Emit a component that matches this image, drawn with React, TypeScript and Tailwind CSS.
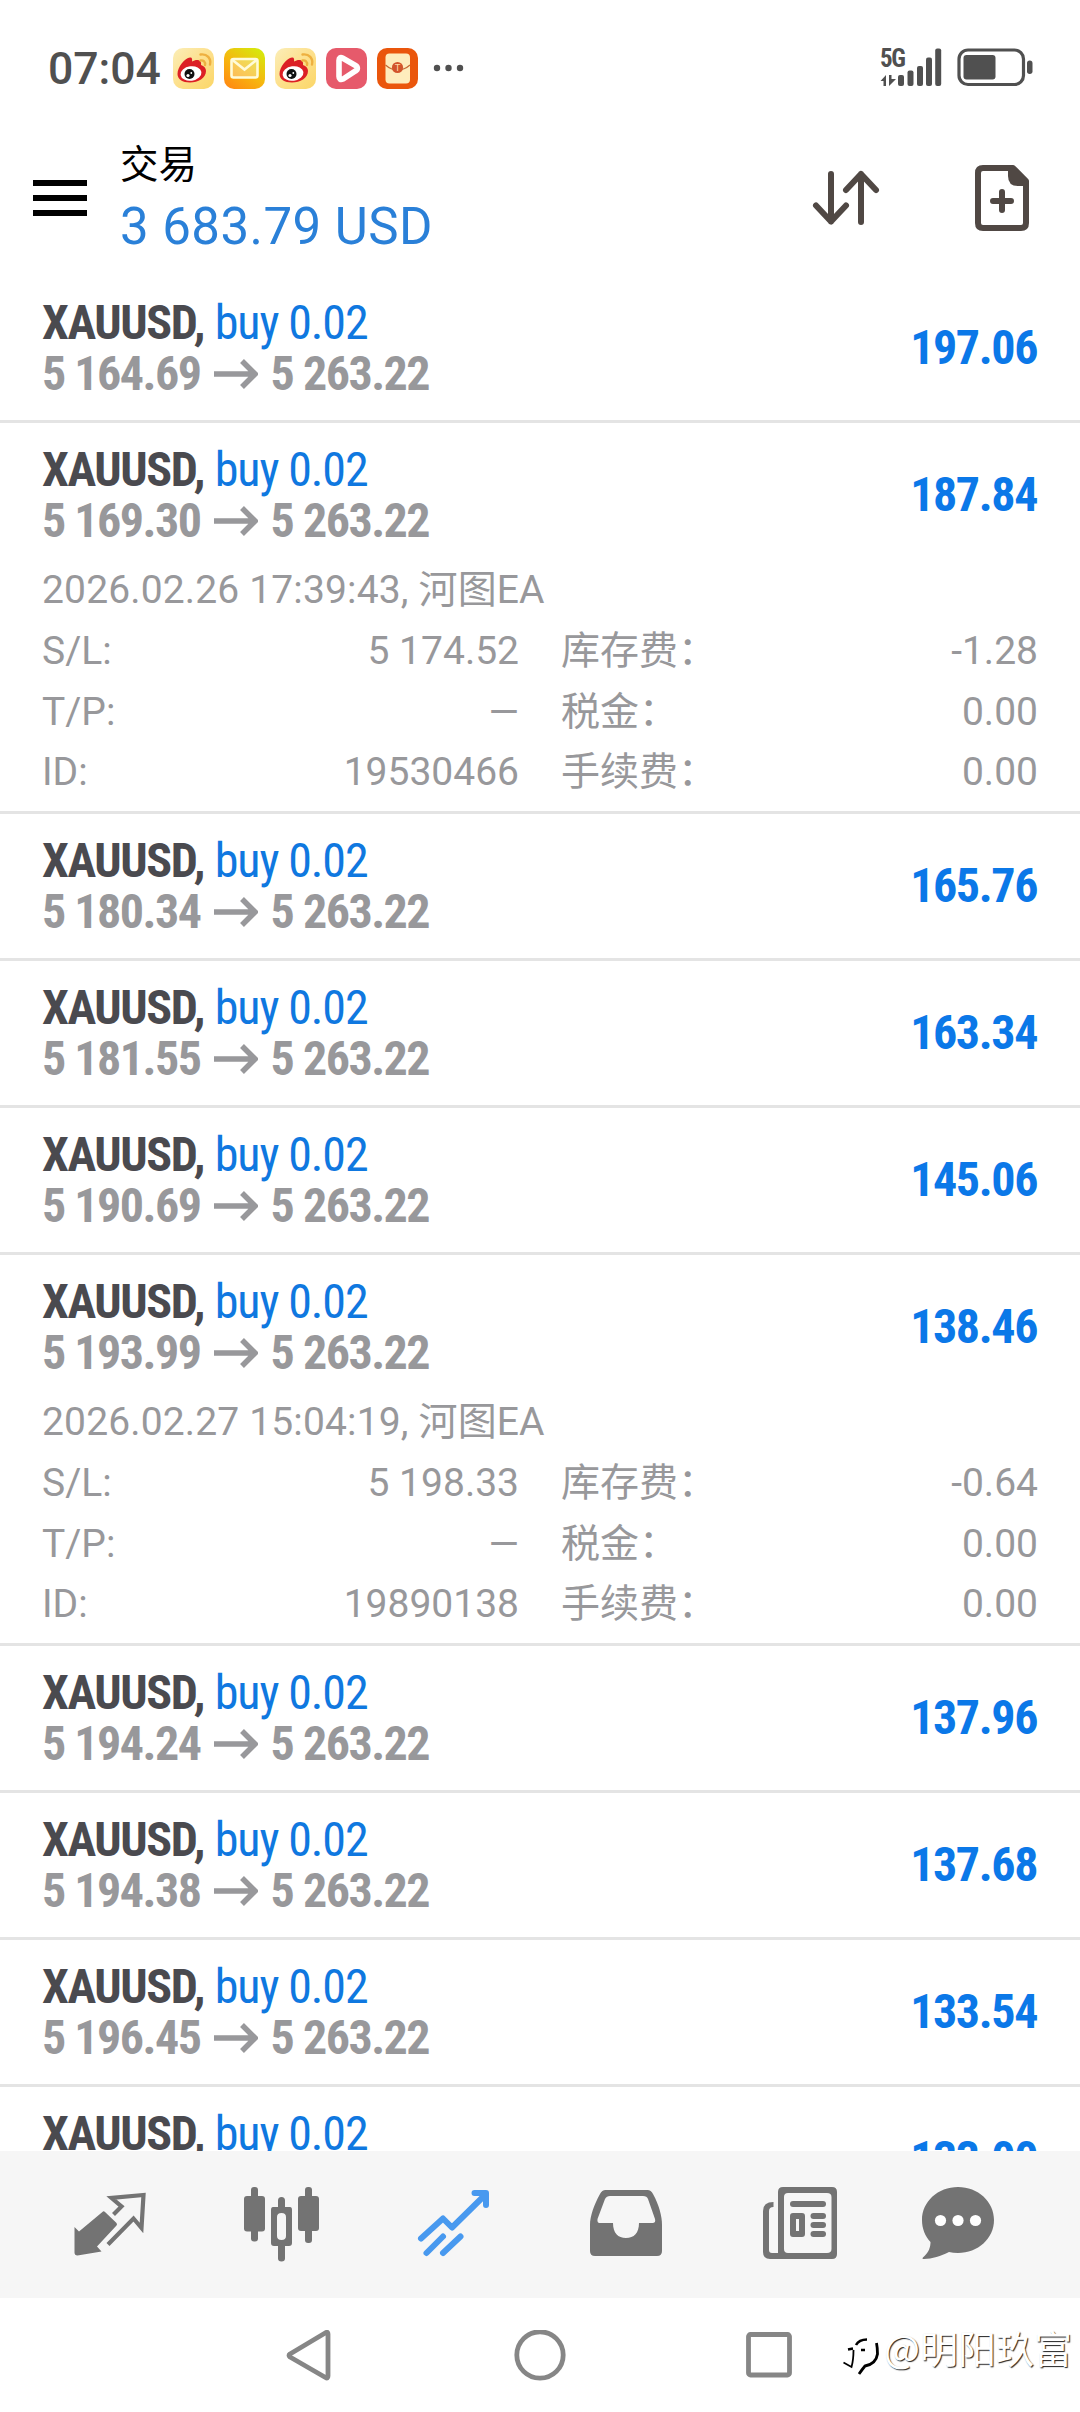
import { cva } from "class-variance-authority";
import type { ReactNode } from "react";

type Details = {
  opened: string;
  stopLoss: string;
  ticket: string;
  swap: string;
};

type Position = {
  open: string;
  profit: string;
  details?: Details;
};

const positions: Position[] = [
  { open: "5 164.69", profit: "197.06" },
  {
    open: "5 169.30",
    profit: "187.84",
    details: {
      opened: "2026.02.26 17:39:43, 河图EA",
      stopLoss: "5 174.52",
      ticket: "19530466",
      swap: "-1.28",
    },
  },
  { open: "5 180.34", profit: "165.76" },
  { open: "5 181.55", profit: "163.34" },
  { open: "5 190.69", profit: "145.06" },
  {
    open: "5 193.99",
    profit: "138.46",
    details: {
      opened: "2026.02.27 15:04:19, 河图EA",
      stopLoss: "5 198.33",
      ticket: "19890138",
      swap: "-0.64",
    },
  },
  { open: "5 194.24", profit: "137.96" },
  { open: "5 194.38", profit: "137.68" },
  { open: "5 196.45", profit: "133.54" },
  { open: "5 197.22", profit: "133.00" },
];

const CURRENT_PRICE = "5 263.22";

const condensed = cva("font-['Roboto_Condensed','Roboto',sans-serif] text-[48px] leading-[51px]", {
  variants: {
    tone: {
      symbol: "font-bold tracking-[-1.4px] text-[#4a4a4f]",
      side: "ml-[1px] font-normal tracking-[-1.1px] text-[#0f78e0]",
      price: "font-bold tracking-[-1.5px] text-[#98989b]",
      profit: "mr-[1px] mb-[2px] font-bold tracking-[-1.4px] text-[#0b78e8]",
    },
  },
});

function WeiboIcon() {
  return (
    <svg width="41" height="41" viewBox="0 0 41 41">
      <defs>
        <linearGradient id="weibo" x1="0" y1="0" x2="1" y2="1">
          <stop offset="0" stopColor="#fbeeb8" />
          <stop offset="0.5" stopColor="#fde08c" />
          <stop offset="1" stopColor="#fbd667" />
        </linearGradient>
      </defs>
      <rect width="41" height="41" rx="10" fill="url(#weibo)" />
      <path
        d="M4.500 26C4.500 19 12 10 17 9.500C19 9.200 19.500 11 19 13.500C23 11 29 11 28 17C31 18 33 20 33 23C33 30 25 34.500 17 34.500C9.500 34.500 4.500 31 4.500 26Z"
        fill="#dc1f25"
      />
      <ellipse cx="18" cy="25.500" rx="10.500" ry="7.200" fill="#fff" transform="rotate(-8 18 25.500)" />
      <circle cx="16.500" cy="26" r="5" fill="#111" />
      <circle cx="15" cy="27.500" r="1.600" fill="#fff" />
      <circle cx="18.300" cy="25" r="0.900" fill="#fff" />
      <path
        d="M27.500 12.500C30.500 12 32.500 14 32 17M27.500 6.500C34 5.500 38.500 10.500 37 16.500"
        fill="none"
        stroke="#eeb040"
        strokeWidth="2.400"
        strokeLinecap="round"
      />
    </svg>
  );
}

function MailIcon() {
  return (
    <svg width="41" height="41" viewBox="0 0 41 41">
      <defs>
        <linearGradient id="mail" x1="0.150" y1="1" x2="0.850" y2="0">
          <stop offset="0" stopColor="#ff8a12" />
          <stop offset="0.450" stopColor="#f7b50f" />
          <stop offset="1" stopColor="#d5ea0c" />
        </linearGradient>
      </defs>
      <rect width="41" height="41" rx="10" fill="url(#mail)" />
      <rect x="7.500" y="11" width="26" height="18.500" rx="2" fill="#fff" fillOpacity="0.300" stroke="#fffbd8" strokeWidth="2.600" />
      <path d="M8.500 12L20.500 21.500L32.500 12" fill="none" stroke="#fffbd8" strokeWidth="2.600" />
    </svg>
  );
}

function VideoIcon() {
  return (
    <svg width="41" height="41" viewBox="0 0 41 41">
      <rect width="41" height="41" rx="10" fill="#e65a6b" />
      <path
        d="M13 12.500C13 9.800 14.500 9 16.500 10L29.500 17.500C32 19 32 21.500 29.500 23L17 31C14.500 32.200 13 31 13 28.500Z"
        fill="none"
        stroke="#fff"
        strokeWidth="5.600"
      />
    </svg>
  );
}

function EnvelopeIcon() {
  return (
    <svg width="41" height="41" viewBox="0 0 41 41">
      <rect width="41" height="41" rx="10" fill="#ea560c" />
      <rect x="8.500" y="5.500" width="24.500" height="30" rx="4" fill="#feedbd" />
      <path d="M8.500 17C13 21 17 22 20.500 22C24 22 28.500 21 33 17" fill="none" stroke="#c46a35" strokeWidth="1.200" />
      <circle cx="20.500" cy="19.500" r="5.600" fill="#d2552c" />
      <text x="20.500" y="23" textAnchor="middle" fontSize="9.500" fontFamily="Roboto, sans-serif" fill="#ffd9a8">
        T
      </text>
    </svg>
  );
}

function StatusBar() {
  return (
    <div className="flex h-[137px] items-start pt-12 pr-[46px] pl-[48px] text-[#505050]">
      <div className="-mt-[4px] w-[125px] font-['Roboto',sans-serif] text-[44.500px] leading-[51px] font-medium">
        07:04
      </div>
      <div className="flex gap-[10px]">
        <WeiboIcon />
        <MailIcon />
        <WeiboIcon />
        <VideoIcon />
        <EnvelopeIcon />
      </div>
      <svg className="ml-[15px]" width="32" height="41" viewBox="0 0 32 41" fill="currentColor">
        <circle cx="4" cy="20" r="3.200" />
        <circle cx="15.500" cy="20" r="3.200" />
        <circle cx="27" cy="20" r="3.200" />
      </svg>
      <svg className="ml-auto overflow-visible" width="154" height="41" viewBox="0 0 154 41" fill="currentColor">
        <text x="0" y="19" fontSize="25" fontWeight="700" fontFamily="'Roboto Condensed', Roboto, sans-serif" textLength="26">
          5G
        </text>
        <path d="M0.500 33L6 27V38H3.500V33ZM9 27H11.500V31H16L9 38Z" />
        <rect x="18" y="27" width="6" height="11" rx="2" />
        <rect x="27.500" y="22.500" width="6" height="15.500" rx="2" />
        <rect x="37" y="18" width="6" height="20" rx="2" />
        <rect x="46" y="9.500" width="6" height="28.500" rx="2" />
        <rect x="55.200" y="0.500" width="6" height="37.500" rx="2" />
        <rect x="79" y="2" width="64.500" height="34.500" rx="9" fill="none" stroke="currentColor" strokeWidth="3.200" />
        <rect x="83.500" y="7" width="32" height="24.500" rx="3" />
        <rect x="147" y="12.500" width="5.500" height="13.500" rx="2.700" />
      </svg>
    </div>
  );
}

function Header() {
  return (
    <header className="flex h-[139px] items-start pr-[51px] pl-[33px]">
      <div className="mt-[43px] flex w-[54px] flex-col gap-[9px]">
        <span className="h-[6px] bg-black" />
        <span className="h-[6px] bg-black" />
        <span className="h-[6px] bg-black" />
      </div>
      <div className="ml-[33px] font-['Roboto','Noto_Sans_CJK_SC',sans-serif]">
        <h1 className="mt-[4px] h-[48px] text-[38.500px] leading-[48px] text-black">交易</h1>
        <p className="mt-[5px] text-[51px] leading-[66px] tracking-[0.45px] text-[#2a80d8]">3 683.79 USD</p>
      </div>
      <svg
        className="mt-[30px] ml-auto"
        width="70"
        height="62"
        viewBox="0 0 70 62"
        fill="none"
        stroke="#504844"
        strokeWidth="6"
        strokeLinecap="round"
        strokeLinejoin="round"
      >
        <path d="M20 7V54.500M5 38.500L20 54.500L35 38.500" />
        <path d="M50 55V7M35 23L50 7L65 23" />
      </svg>
      <svg className="mt-[28px] ml-[94px]" width="54" height="66" viewBox="0 0 54 66" fill="none">
        <path
          d="M8 3H38L51 16V58Q51 63 46 63H8Q3 63 3 58V8Q3 3 8 3Z"
          stroke="#504844"
          strokeWidth="6"
          strokeLinejoin="round"
        />
        <path d="M33 4V11Q33 21 43 21H53L51 14L40 3Z" fill="#504844" />
        <path d="M27 27V45M18 36H36" stroke="#504844" strokeWidth="6" strokeLinecap="round" />
      </svg>
    </header>
  );
}

function DetailRow({ label, value, feeLabel, fee }: { label: string; value: string; feeLabel: string; fee: string }) {
  return (
    <div className="grid h-[60.5px] grid-cols-[477px_1fr] gap-x-[42px]">
      <div className="flex items-center justify-between">
        <span>{label}</span>
        <span>{value}</span>
      </div>
      <div className="flex items-center justify-between">
        <span>{feeLabel}</span>
        <span>{fee}</span>
      </div>
    </div>
  );
}

function PositionRow({ open, profit, details }: Position) {
  return (
    <li className="border-b-[3px] border-[#e4e4e4] px-[42px]">
      <div className="flex h-[144px] items-center justify-between">
        <div>
          <p className="flex h-[51px] whitespace-pre">
            <span className={condensed({ tone: "symbol" })}>XAUUSD, </span>
            <span className={condensed({ tone: "side" })}>buy 0.02</span>
          </p>
          <p className="flex h-[51px] items-center">
            <span className={condensed({ tone: "price" })}>{open}</span>
            <svg className="mx-[13px]" width="44" height="30" viewBox="0 0 44 30" fill="none" stroke="#98989b" strokeWidth="5.500">
              <path d="M0 15H41M28 2L41 15L28 28" />
            </svg>
            <span className={condensed({ tone: "price" })}>{CURRENT_PRICE}</span>
          </p>
        </div>
        <span className={condensed({ tone: "profit" })}>{profit}</span>
      </div>
      {details && (
        <div className="-mt-[7px] h-[251px] font-['Roboto','Noto_Sans_CJK_SC',sans-serif] text-[39px] leading-[60px] text-[#98989b]">
          <p className="h-[61px] tracking-[0.15px]">{details.opened}</p>
          <DetailRow label="S/L:" value={details.stopLoss} feeLabel="库存费：" fee={details.swap} />
          <DetailRow label="T/P:" value="—" feeLabel="税金：" fee="0.00" />
          <DetailRow label="ID:" value={details.ticket} feeLabel="手续费：" fee="0.00" />
        </div>
      )}
    </li>
  );
}

function TabIcon({ width, children }: { width: number; children: ReactNode }) {
  return (
    <svg width={width} height="76" viewBox={`0 0 ${width} 76`} fill="currentColor">
      {children}
    </svg>
  );
}

function TabBar() {
  return (
    <nav className="flex h-[147px] shrink-0 bg-[#f6f6f6] pt-9 pl-[74px] text-[#737373]">
      <TabIcon width={72}>
        <path
          d="M39.500 27.500L47.500 19.500L37.500 11L69.500 8L67.500 41L59.500 31.500L34 57.500"
          fill="none"
          stroke="currentColor"
          strokeWidth="4.200"
        />
        <path d="M29 24.500Q30 24 31 25L42.500 36Q43.500 37.500 42.500 38.500L23 59.500L27.500 64.500L3.500 68.500Q0.500 68.500 0.500 65.500V40L5 44.500Z" />
      </TabIcon>
      <div className="ml-[98px]">
        <TabIcon width={76}>
          <rect y="9" width="21" height="35.500" rx="3" />
          <rect x="7" width="7" height="54.500" rx="3" />
          <path
            fillRule="evenodd"
            d="M29 20H46Q48 20 48 23V56Q48 59 45 59H30Q27 59 27 56V23Q27 20 29 20ZM33 30V49Q33 53 37.500 53Q42 53 42 49V30Q42 26 37.500 26Q33 26 33 30Z"
          />
          <path d="M34 23V13.500Q34 10 37.500 10Q41 10 41 13.500V23ZM34 57H41V71.500Q41 74.500 37.500 74.500Q34 74.500 34 71.500Z" />
          <rect x="54" y="9" width="21" height="35" rx="3" />
          <rect x="61" width="7" height="56" rx="3" />
        </TabIcon>
      </div>
      <div className="ml-[97px] text-[#4899ef]">
        <TabIcon width={74}>
          <g fill="none" stroke="currentColor" strokeWidth="6" strokeLinecap="round" strokeLinejoin="round">
            <path d="M4 51.500L26 31.500L35 40.500L68.500 7.500" />
            <path d="M57.500 6H69V18" />
            <path d="M9.500 66L26 49.500M26 66L43.500 49.500" />
          </g>
          <path d="M58 4H71V19L66 13Z" />
        </TabIcon>
      </div>
      <div className="ml-[99px]">
        <TabIcon width={73}>
          <path
            fillRule="evenodd"
            d="M15.500 3H57.500Q61 3 63 7C69 18 72 29 72 38V64Q72 69 67 69H5Q0 69 0 64V38C0 29 4 18 10 7Q12 3 15.500 3ZM20 9Q16.500 9 15 12L7.500 32Q7 36 9.500 36H23C23 46 28 51 36 51C44 51 49 46 49 36H62.500Q66 36 65 32L58 12Q57 9 53 9Z"
          />
        </TabIcon>
      </div>
      <div className="ml-[100px]">
        <TabIcon width={74}>
          <path
            fillRule="evenodd"
            d="M20 0H69Q74 0 74 5V67Q74 72 69 72H7Q0 72 0 65V24Q0 15 10.500 15V20Q6 20 6 24V63Q6 66 9 66H15V5Q15 0 20 0ZM25 6Q21 6 21 10V62Q21 66 25 66H64Q68.500 66 68.500 62V10Q68.500 6 64 6Z"
          />
          <rect x="27" y="14" width="36" height="6" rx="3" />
          <path fillRule="evenodd" d="M30 26H39Q42 26 42 29V47Q42 50 39 50H30Q27 50 27 47V29Q27 26 30 26ZM33 32V44H36V32Z" />
          <rect x="47.500" y="26" width="15.500" height="6" rx="3" />
          <rect x="47.500" y="35" width="15.500" height="6" rx="3" />
          <rect x="47.500" y="44" width="15.500" height="6" rx="3" />
        </TabIcon>
      </div>
      <div className="ml-[85px]">
        <TabIcon width={72}>
          <path d="M36 0C56 0 72 14.500 72 33C72 51.500 56 66 36 66Q31 66 27 65C19 69 10 72 2 72Q-1 72 2 69.500C7 65 8.500 60 8.500 55C3 49 0 41.500 0 33C0 14.500 16 0 36 0Z" />
          <g fill="#fff">
            <circle cx="18.500" cy="33.500" r="5.600" />
            <circle cx="36" cy="33.500" r="5.600" />
            <circle cx="53.500" cy="33.500" r="5.600" />
          </g>
        </TabIcon>
      </div>
    </nav>
  );
}

function SystemNav() {
  return (
    <div className="relative flex h-[114px] shrink-0 items-start bg-white pt-8 pl-[286px]">
      <svg width="508" height="51" viewBox="0 0 508 51" fill="none" stroke="#868686" strokeWidth="4.800" strokeLinejoin="round">
        <path d="M40 2.500Q42 1.500 42 4V46Q42 49 39.500 47.500L4 27Q2 25.500 4 24Z" />
        <circle cx="254" cy="25" r="23.200" />
        <rect x="462.500" y="4.500" width="41" height="40.500" rx="2" />
      </svg>
      <div className="absolute top-[22px] right-[8px] flex items-start">
        <svg className="mt-[18px] mr-[5px]" width="36" height="38" viewBox="0 0 36 38" fill="none" stroke="#000">
          <path d="M13 7Q16 1.500 24 1.500M5 11.500L10 10.500M18 12H22" strokeWidth="2.600" />
          <path d="M10.500 12Q10.500 22 8.500 29L0.500 24.500" strokeWidth="1.800" />
          <path d="M33.500 5Q34.500 10 34.500 16Q33 26 22 28Q19.500 31 16 36" strokeWidth="2.800" />
        </svg>
        <span className="font-['Noto_Sans_CJK_SC',sans-serif] text-[38px] leading-[54px] font-normal text-white [text-shadow:1px_1px_1px_#222]">
          @明阳玖富
        </span>
      </div>
    </div>
  );
}

export default function App() {
  return (
    <div className="flex h-[2412px] w-[1080px] flex-col overflow-hidden bg-white">
      <StatusBar />
      <Header />
      <ul className="min-h-0 flex-1 overflow-hidden">
        {positions.map((position) => (
          <PositionRow key={position.open} {...position} />
        ))}
      </ul>
      <TabBar />
      <SystemNav />
    </div>
  );
}
